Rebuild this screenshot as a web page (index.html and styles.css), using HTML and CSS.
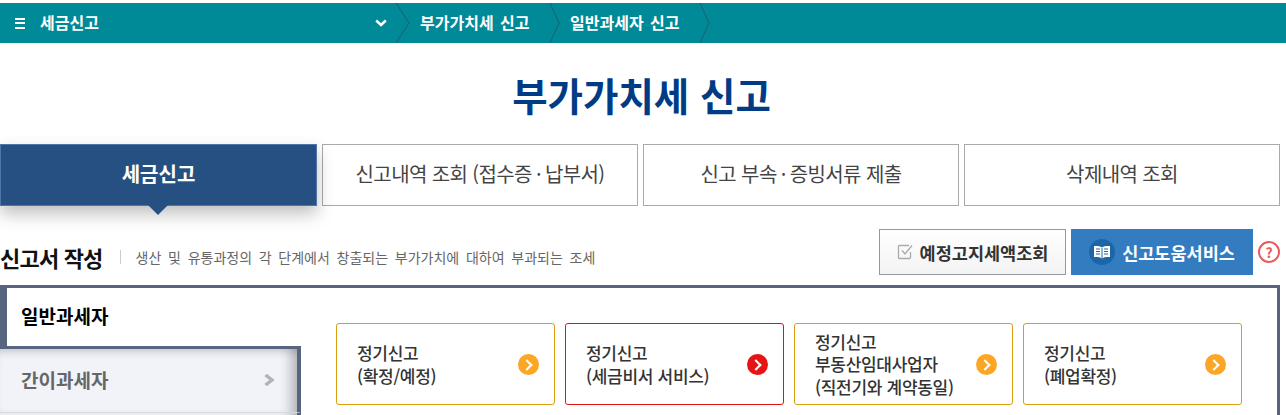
FILE: index.html
```html
<!DOCTYPE html>
<html lang="ko">
<head>
    <meta charset="UTF-8">
    <title>부가가치세 신고</title>
    <link rel="stylesheet" href="styles.css">
</head>
<body>
    <div class="crumb">
        <div class="crumb-first">
            <i class="crumb-menu"></i><span class="crumb-label">세금신고</span>
            <svg class="crumb-down" width="12" height="8" viewBox="0 0 12 8"><path d="M1.200 1.500 6 6l4.800-4.500" fill="none" stroke="#fff" stroke-width="2.500"/></svg>
        </div>
        <svg class="crumb-sep" width="15" height="40" viewBox="0 0 15 40"><path d="M1 0 14 20 1 40" fill="none" stroke="#1c5f70"/></svg>
        <a class="crumb-item crumb-item_1">부가가치세 신고</a>
        <svg class="crumb-sep" width="11" height="40" viewBox="0 0 11 40"><path d="M1 0 10 20 1 40" fill="none" stroke="#1c5f70"/></svg>
        <a class="crumb-item crumb-item_2">일반과세자 신고</a>
        <svg class="crumb-sep" width="11" height="40" viewBox="0 0 11 40"><path d="M1 0 10 20 1 40" fill="none" stroke="#1c5f70"/></svg>
    </div>

    <h1 class="title">부가가치세 신고</h1>

    <ul class="tabs">
        <li class="tab tab-on">세금신고</li>
        <li class="tab"><span>신고내역 조회 (접수증<span class="tab-dot"> · </span>납부서)</span></li>
        <li class="tab"><span>신고 부속<span class="tab-dot"> · </span>증빙서류 제출</span></li>
        <li class="tab">삭제내역 조회</li>
    </ul>

    <div class="head">
        <h2 class="head-title">신고서 작성</h2>
        <p class="head-desc">생산 및 유통과정의 각 단계에서 창출되는 부가가치에 대하여 부과되는 조세</p>
        <a class="btn btn-gray">
            <svg width="17" height="16" viewBox="0 0 17 16"><path d="M12 1.500H2.500a1 1 0 0 0-1 1v11a1 1 0 0 0 1 1h10a1 1 0 0 0 1-1V8" fill="none" stroke="#aaa" stroke-width="1.300"/><path d="M5 6.500 8 10l7-8.500" fill="none" stroke="#aaa" stroke-width="1.300"/></svg>
            예정고지세액조회
        </a>
        <a class="btn btn-blue">
            <span class="btn-icon">
                <svg width="18" height="14" viewBox="0 0 18 14"><path d="M9 2.500C7 1 4 .8 1 1v11c3-.2 6 0 8 1.500 2-1.500 5-1.700 8-1.500V1c-3-.2-6 0-8 1.500z" fill="#fff"/><path d="M9 3v10M3 4h4M3 6.500h4M3 9h4M11 4h4M11 6.500h4M11 9h4" stroke="#1c66a8" stroke-width="1"/></svg>
            </span>
            신고도움서비스
        </a>
        <span class="help">?</span>
    </div>

    <div class="panel">
        <ul class="side">
            <li class="side-item side-item_on">일반과세자</li>
            <li class="side-item">간이과세자
                <svg class="side-arrow" width="11" height="12" viewBox="0 0 11 12"><path d="M1.500 1 8 6l-6.500 5" fill="none" stroke="#b0b2bc" stroke-width="3.400"/></svg>
            </li>
            <li class="side-item side-item_next"></li>
        </ul>
        <div class="cards">
            <a class="card">
                <span class="card-text">정기신고<br>(확정/예정)</span>
                <i class="card-go"></i>
            </a>
            <a class="card card-red">
                <span class="card-text">정기신고<br>(세금비서 서비스)</span>
                <i class="card-go"></i>
            </a>
            <a class="card">
                <span class="card-text">정기신고<br>부동산임대사업자<br>(직전기와 계약동일)</span>
                <i class="card-go"></i>
            </a>
            <a class="card">
                <span class="card-text">정기신고<br>(폐업확정)</span>
                <i class="card-go"></i>
            </a>
        </div>
    </div>
</body>
</html>
```

FILE: styles.css
```css
*{ box-sizing: border-box; margin: 0; padding: 0;}
html,body{ height: 415px; overflow: hidden;}
body{ width: 1286px; padding-top: 3px; background: #fff; font-family: "Noto Sans CJK KR","Liberation Sans",sans-serif; color: #333;}
ul{ list-style: none;}

/* top path bar */
.crumb{ display: flex; align-items: center; height: 40px; background: #008996; color: #fff; font-size: 16px; line-height: 24px; font-weight: 700;}
.crumb-first{ display: flex; align-items: center; width: 395px; padding-left: 15px;}
.crumb-menu{ width: 10px; height: 11px; border-top: 2px solid #fff; border-bottom: 2px solid #fff; position: relative;}
.crumb-menu:after{ content: ""; position: absolute; left: 0; top: 2.500px; width: 10px; height: 2px; background: #fff;}
.crumb-label{ margin: 0 0 2px 15px;}
.crumb-down{ margin-left: auto; margin-right: 8px;}
.crumb-sep{ flex: none;}
.crumb-item{ margin-bottom: 2px; word-spacing: 2px;}
.crumb-item_1{ margin-left: 10px; width: 129px;}
.crumb-item_2{ margin-left: 10px; width: 129px;}

.title{ width: 1283px; margin-top: 24px; height: 77px; text-align: center; font-size: 38.500px; line-height: 54px; font-weight: 700; color: #003c86;}

/* tabs */
.tabs{ display: grid; grid-template-columns: 317px 316px 316px 316px; column-gap: 5px; height: 62px;}
.tab{ display: flex; align-items: center; justify-content: center; border: 1px solid #aaa; font-size: 20px; line-height: 26px; color: #444; letter-spacing: -.6px; padding-bottom: 2px;}
.tab-dot{ word-spacing: -1px;}
.tab-on{ position: relative; background: #265082; border-color: #4f76a6; color: #fff; font-weight: 700; box-shadow: 0 8px 16px rgba(0,0,0,.25); letter-spacing: 0;}
.tab-on:after{ content: ""; position: absolute; left: 147px; top: 60px; width: 20px; height: 10px; background: #265082; clip-path: polygon(0 0,100% 0,50% 100%);}

/* section head */
.head{ display: flex; align-items: center; height: 46px; margin-top: 23px; width: 1280px;}
.head-title{ font-size: 22px; font-weight: 700; color: #111; letter-spacing: -.8px; margin-top: 9px;}
.head-desc{ margin: 9px 0 0 17px; padding-left: 15px; font-size: 14px; word-spacing: 2.800px; color: #666; line-height: 14px; border-left: 1px solid #ccc;}
.btn{ display: flex; align-items: center; justify-content: center; height: 46px; font-size: 17.500px; font-weight: 700;}
.btn-gray{ gap: 6px; width: 187px; margin-left: auto; border: 1px solid #999; background: linear-gradient(#fff,#f3f3f3); color: #333;}
.btn-blue{ gap: 7px; width: 182px; margin-left: 5px; background: #337cbf; color: #fff;}
.btn-icon{ display: flex; align-items: center; justify-content: center; width: 26px; height: 26px; border-radius: 50%; background: #1c66a8;}
.help{ flex: none; width: 22px; height: 22px; margin-left: 5px; border: 2px solid #ea5a5a; border-radius: 50%; text-align: center; font-size: 14px; line-height: 18px; font-weight: 700; color: #ea5a5a;}

/* panel */
.panel{ display: flex; width: 1280px; height: 130px; margin-top: 10px; border: 3px solid #58657f; border-bottom: 0; border-left: 0;}
.side{ width: 301px; flex: none;}
.side-item{ display: flex; align-items: center; height: 67px; padding-left: 21px; padding-bottom: 3px; background: #f1f3f9; font-size: 19px; font-weight: 700; color: #666; box-shadow: inset 0 8px 10px -6px rgba(0,0,0,.2), inset -14px 0 12px -8px rgba(0,0,0,.25); border-top: 3px solid #58657f; border-right: 4px solid #58657f; border-bottom: 1px solid #d7d9e0;}
.side-item_on{ height: 58px; background: #fff; color: #000; border: 0; border-left: 7px solid #58657f; padding: 0 0 3px 14px; box-shadow: none;}
.side-item_next{ height: 2px; padding: 0; border-top: 0; border-bottom: 0; box-shadow: inset -14px 0 12px -8px rgba(0,0,0,.25);}
.side-arrow{ margin: 2px 22px 0 auto;}

/* cards */
.cards{ display: grid; grid-template-columns: repeat(4,219px); column-gap: 10px; margin: 35px 0 0 35px; height: 82px;}
.card{ display: flex; align-items: center; justify-content: space-between; padding: 0 15px 0 20px; border: 1px solid #dc9e14; border-radius: 3px;}
.card-text{ padding-top: 1px; font-size: 17px; line-height: 22.500px; font-weight: 500; letter-spacing: -.3px; color: #333;}
.card-go{ position: relative; flex: none; width: 21px; height: 21px; border-radius: 50%; background: #fca625;}
.card-go:after{ content: ""; position: absolute; left: 5px; top: 7px; width: 6px; height: 6px; border: solid #fff; border-width: 2px 2px 0 0; transform: rotate(45deg);}
.card-red{ border-color: #e01414;}
.card-red .card-go{ background: #e61414;}
```
